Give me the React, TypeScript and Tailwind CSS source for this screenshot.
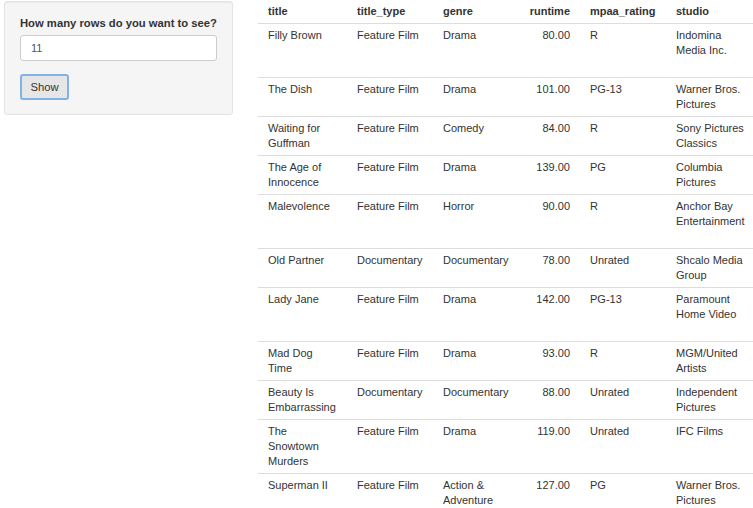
import React from 'react';

type Movie = {
  title: string;
  titleType: string;
  genre: string;
  runtime: string;
  rating: string;
  studio: string;
  tall?: boolean;
};

const movies: Movie[] = [
  { title: 'Filly Brown', titleType: 'Feature Film', genre: 'Drama', runtime: '80.00', rating: 'R', studio: 'Indomina Media Inc.', tall: true },
  { title: 'The Dish', titleType: 'Feature Film', genre: 'Drama', runtime: '101.00', rating: 'PG-13', studio: 'Warner Bros. Pictures' },
  { title: 'Waiting for Guffman', titleType: 'Feature Film', genre: 'Comedy', runtime: '84.00', rating: 'R', studio: 'Sony Pictures Classics' },
  { title: 'The Age of Innocence', titleType: 'Feature Film', genre: 'Drama', runtime: '139.00', rating: 'PG', studio: 'Columbia Pictures' },
  { title: 'Malevolence', titleType: 'Feature Film', genre: 'Horror', runtime: '90.00', rating: 'R', studio: 'Anchor Bay Entertainment', tall: true },
  { title: 'Old Partner', titleType: 'Documentary', genre: 'Documentary', runtime: '78.00', rating: 'Unrated', studio: 'Shcalo Media Group' },
  { title: 'Lady Jane', titleType: 'Feature Film', genre: 'Drama', runtime: '142.00', rating: 'PG-13', studio: 'Paramount Home Video', tall: true },
  { title: 'Mad Dog Time', titleType: 'Feature Film', genre: 'Drama', runtime: '93.00', rating: 'R', studio: 'MGM/United Artists' },
  { title: 'Beauty Is Embarrassing', titleType: 'Documentary', genre: 'Documentary', runtime: '88.00', rating: 'Unrated', studio: 'Independent Pictures' },
  { title: 'The Snowtown Murders', titleType: 'Feature Film', genre: 'Drama', runtime: '119.00', rating: 'Unrated', studio: 'IFC Films', tall: true },
  { title: 'Superman II', titleType: 'Feature Film', genre: 'Action & Adventure', runtime: '127.00', rating: 'PG', studio: 'Warner Bros. Pictures', tall: true },
];

export default function App() {
  return (
    <div className="flex w-[753px] h-[508px] overflow-hidden bg-white text-[#333333] font-['Liberation_Sans',Arial,sans-serif]">
      {/* Sidebar */}
      <div className="w-[258px] shrink-0">
        <div className="ml-[4px] mt-[1px] w-[229px] h-[114px] rounded-[3px] border border-[#e3e3e3] bg-[#f5f5f5] px-[15px] pt-[14px] shadow-[inset_0_1px_1px_rgba(0,0,0,0.05)]">
          <label className="block text-[11.25px] leading-[15px] font-bold">How many rows do you want to see?</label>
          <input
            type="number"
            defaultValue={11}
            className="mt-[4px] block w-[197px] h-[26px] rounded-[3px] border border-[#cccccc] bg-white px-[10px] text-[11px] text-[#555555] outline-none"
          />
          <button className="mt-[13px] block w-[49px] h-[26px] rounded-[3px] border-2 border-[#82b1ea] bg-[#e6e6e6] text-[11.25px] text-[#333333]">
            Show
          </button>
        </div>
      </div>

      {/* Table */}
      <div className="flex-1 min-w-0 overflow-hidden">
        <table className="table-fixed border-collapse w-[700px] text-[11px] leading-[15px]">
          <colgroup>
            <col className="w-[89px]" />
            <col className="w-[86px]" />
            <col className="w-[86px]" />
            <col className="w-[61px]" />
            <col className="w-[86px]" />
            <col className="w-[96px]" />
            <col className="w-[196px]" />
          </colgroup>
          <thead>
            <tr className="border-b border-[#dddddd]">
              <th className="px-[10px] pt-[4px] pb-[4px] text-left font-bold">title</th>
              <th className="px-[10px] pt-[4px] pb-[4px] text-left font-bold">title_type</th>
              <th className="px-[10px] pt-[4px] pb-[4px] text-left font-bold">genre</th>
              <th className="px-[10px] pt-[4px] pb-[4px] text-right font-bold">runtime</th>
              <th className="px-[10px] pt-[4px] pb-[4px] text-left font-bold">mpaa_rating</th>
              <th className="px-[10px] pt-[4px] pb-[4px] text-left font-bold">studio</th>
              <th className="px-[10px] pt-[4px] pb-[4px] text-left font-bold"></th>
            </tr>
          </thead>
          <tbody>
            {movies.map((m) => (
              <tr key={m.title} className="border-b border-[#dddddd] align-top">
                <td className="px-[10px] pt-[4px] pb-[4px]">
                  <div className={m.tall ? 'min-h-[45px]' : ''}>{m.title}</div>
                </td>
                <td className="px-[10px] pt-[4px] pb-[4px]">{m.titleType}</td>
                <td className="px-[10px] pt-[4px] pb-[4px]">{m.genre}</td>
                <td className="px-[10px] pt-[4px] pb-[4px] text-right">{m.runtime}</td>
                <td className="px-[10px] pt-[4px] pb-[4px]">{m.rating}</td>
                <td className="px-[10px] pt-[4px] pb-[4px]">{m.studio}</td>
                <td className="px-[10px] pt-[4px] pb-[4px]"></td>
              </tr>
            ))}
          </tbody>
        </table>
      </div>
    </div>
  );
}
